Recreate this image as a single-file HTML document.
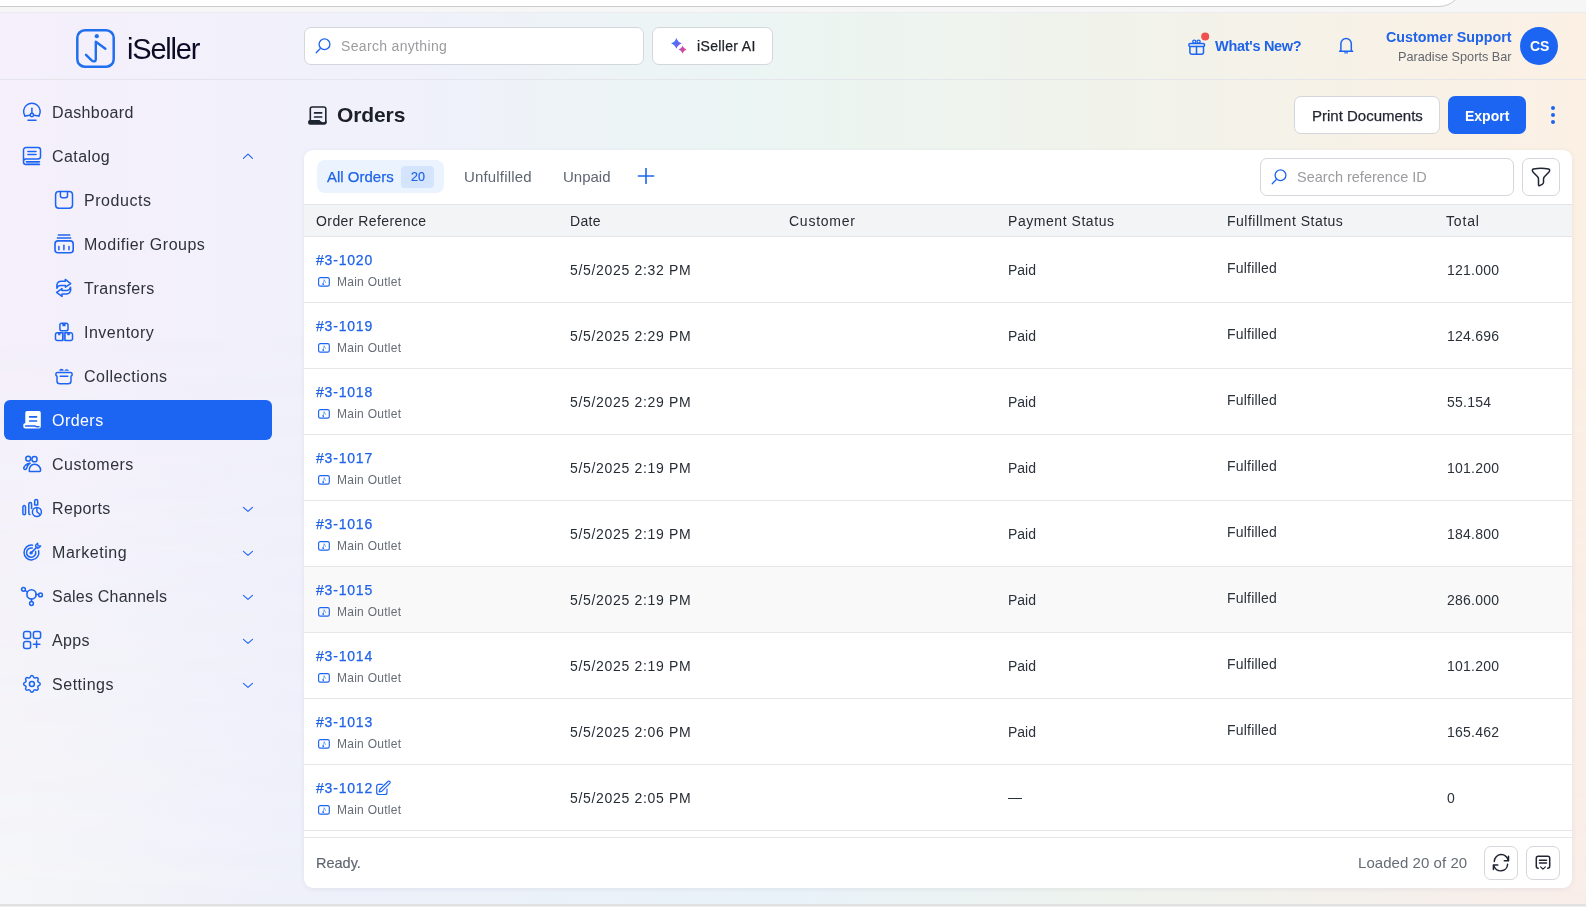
<!DOCTYPE html>
<html><head><meta charset="utf-8"><title>Orders - iSeller</title>
<style>
*{box-sizing:border-box;margin:0;padding:0}
html,body{width:1586px;height:907px;overflow:hidden}
body{font-family:"Liberation Sans",sans-serif;position:relative;background:#f0f1fa}
#bg1{position:absolute;left:0;top:0;width:1586px;height:907px;background:linear-gradient(90deg,#f5f0fb 0%,#f0f1fb 25%,#ebf5f3 47%,#f1f3eb 70%,#fcf0e4 100%)}
#bg2{position:absolute;left:0;top:0;width:1586px;height:907px;background:linear-gradient(90deg,#f5f6f8 0%,#eef0fa 19%,#e8f2f8 50%,#eef3ee 70%,#f9ede9 100%);-webkit-mask-image:linear-gradient(180deg,rgba(0,0,0,0) 0%,rgba(0,0,0,0) 35%,rgba(0,0,0,1) 100%);mask-image:linear-gradient(180deg,rgba(0,0,0,0) 0%,rgba(0,0,0,0) 35%,rgba(0,0,0,1) 100%)}
.abs{position:absolute}
.t{white-space:nowrap;will-change:transform}
.box{background:#fff;border:1px solid #d3d6db}
.card{background:#fff;border-radius:9px;box-shadow:0 1px 5px rgba(70,80,110,0.09)}
</style></head><body>

<div id="bg1"></div><div id="bg2"></div>
<div class="abs" style="left:0;top:0;width:1586px;height:13px;background:#f6f6f6;border-bottom:1px solid #ececf0"></div>
<div class="abs" style="left:-30px;top:-20px;width:1493px;height:26.6px;background:#fff;border:1.6px solid #cbcbcb;border-radius:0 0 24px 0"></div>
<div class="abs" style="left:0;top:79px;width:1586px;height:1px;background:#e3e5ea"></div>
<div class="abs" style="left:0;top:904px;width:1586px;height:3px;background:#f0f0f0;border-top:2px solid #e0e0e0"></div>

<svg class="abs" style="left:18px;top:98px" width="30" height="30" viewBox="0 0 30 30"><path d="M6.9 18 A8.3 8.3 0 1 1 20.9 18" fill="none" stroke="#1c64f2" stroke-width="1.5" stroke-linecap="round" stroke-linejoin="round"/><path d="M6.9 18 L12 17.2" fill="none" stroke="#1c64f2" stroke-width="1.5" stroke-linecap="round" stroke-linejoin="round"/><path d="M15.8 17.2 L20.9 18" fill="none" stroke="#1c64f2" stroke-width="1.5" stroke-linecap="round" stroke-linejoin="round"/><path d="M13.9 10.3 V15.3" fill="none" stroke="#1c64f2" stroke-width="1.5" stroke-linecap="round" stroke-linejoin="round"/><circle cx="13.9" cy="17" r="1.7" fill="none" stroke="#1c64f2" stroke-width="1.5"/><path d="M10 22.3 H18" fill="none" stroke="#1c64f2" stroke-width="1.5" stroke-linecap="round" stroke-linejoin="round"/></svg>
<div class="abs t " style="left:52px;top:105px;font-size:16px;line-height:16px;color:#2e323a;font-weight:400;letter-spacing:0.38px;">Dashboard</div>
<svg class="abs" style="left:18px;top:142px" width="30" height="30" viewBox="0 0 30 30"><path d="M5.5 20 V8 A2.5 2.5 0 0 1 8 5.5 H20 A2.5 2.5 0 0 1 22.5 8 V14.4 A2.5 2.5 0 0 1 20 16.9 H8 A2.5 2.5 0 0 0 5.5 19.4 V20 A2.5 2.5 0 0 0 8 22.5 H21.5" fill="none" stroke="#1c64f2" stroke-width="1.5" stroke-linecap="round" stroke-linejoin="round"/><path d="M8.3 19.7 H21.5" fill="none" stroke="#1c64f2" stroke-width="1.5" stroke-linecap="round" stroke-linejoin="round"/><path d="M8.3 19.7 H21.5 V22.5 H8.3Z" fill="rgba(28,100,242,0.45)"/><path d="M9.9 9.6 H18" fill="none" stroke="#1c64f2" stroke-width="1.5" stroke-linecap="round" stroke-linejoin="round"/><path d="M9.9 12.6 H18" fill="none" stroke="#1c64f2" stroke-width="1.5" stroke-linecap="round" stroke-linejoin="round"/></svg>
<div class="abs t " style="left:52px;top:149px;font-size:16px;line-height:16px;color:#2e323a;font-weight:400;letter-spacing:0.42px;">Catalog</div>
<svg class="abs" style="left:232px;top:142px" width="30" height="30" viewBox="0 0 30 30"><path d="M11.4 16.4 L16 12.2 L20.5 16.4" fill="none" stroke="#1c64f2" stroke-width="1.1" stroke-linecap="round" stroke-linejoin="round"/></svg>
<svg class="abs" style="left:50px;top:186px" width="30" height="30" viewBox="0 0 30 30"><path d="M8.8 5.5 H19.3 A3.2 3.2 0 0 1 22.5 8.7 V19 A3.2 3.2 0 0 1 19.3 22.2 H8.8 A3.2 3.2 0 0 1 5.6 19 V8.7 A3.2 3.2 0 0 1 8.8 5.5Z" fill="none" stroke="#1c64f2" stroke-width="1.5" stroke-linecap="round" stroke-linejoin="round"/><path d="M10.4 5.5 V9.8 A1.9 1.9 0 0 0 12.3 11.7 H15.6 A1.9 1.9 0 0 0 17.5 9.8 V5.5" fill="none" stroke="#1c64f2" stroke-width="1.5" stroke-linecap="round" stroke-linejoin="round"/></svg>
<div class="abs t " style="left:84px;top:193px;font-size:16px;line-height:16px;color:#2e323a;font-weight:400;letter-spacing:0.55px;">Products</div>
<svg class="abs" style="left:50px;top:230px" width="30" height="30" viewBox="0 0 30 30"><path d="M8.3 5 H19.8" fill="none" stroke="#1c64f2" stroke-width="1.5" stroke-linecap="round" stroke-linejoin="round"/><path d="M7.4 8.1 H20.7" fill="none" stroke="#1c64f2" stroke-width="1.5" stroke-linecap="round" stroke-linejoin="round"/><path d="M8 10.9 H20.2 A3 3 0 0 1 23.2 13.9 V19.8 A3 3 0 0 1 20.2 22.8 H8 A3 3 0 0 1 5 19.8 V13.9 A3 3 0 0 1 8 10.9Z" fill="none" stroke="#1c64f2" stroke-width="1.6" stroke-linecap="round" stroke-linejoin="round"/><path d="M8.9 16.5 V19.8" fill="none" stroke="#1c64f2" stroke-width="1.5" stroke-linecap="round" stroke-linejoin="round"/><path d="M13.9 15.2 V19.8" fill="none" stroke="#1c64f2" stroke-width="1.5" stroke-linecap="round" stroke-linejoin="round"/><path d="M19 16.5 V19.8" fill="none" stroke="#1c64f2" stroke-width="1.5" stroke-linecap="round" stroke-linejoin="round"/></svg>
<div class="abs t " style="left:84px;top:237px;font-size:16px;line-height:16px;color:#2e323a;font-weight:400;letter-spacing:0.5px;">Modifier Groups</div>
<svg class="abs" style="left:50px;top:274px" width="30" height="30" viewBox="0 0 30 30"><path d="M6.9 14.2 C6.2 10 7.8 7.3 10.8 7.3 H15.3 V5.4 L20.7 9.6 L15.4 13.2 V11.4 H10.8 C8.8 11.4 7.4 12.4 6.9 14.2Z" fill="none" stroke="#1c64f2" stroke-width="1.5" stroke-linecap="round" stroke-linejoin="round"/><path d="M20.5 13.2 C21.4 17 19.8 19.9 16.8 19.9 H12 V22.4 L6.6 18.3 L12 14.6 V16.4 H17 C19 16.4 20.1 15.2 20.5 13.2Z" fill="none" stroke="#1c64f2" stroke-width="1.5" stroke-linecap="round" stroke-linejoin="round"/></svg>
<div class="abs t " style="left:84px;top:281px;font-size:16px;line-height:16px;color:#2e323a;font-weight:400;letter-spacing:0.42px;">Transfers</div>
<svg class="abs" style="left:50px;top:318px" width="30" height="30" viewBox="0 0 30 30"><path d="M11.7 5.3 H16.2 A1.8 1.8 0 0 1 18 7.1 V10.9 A1.8 1.8 0 0 1 16.2 12.7 H11.7 A1.8 1.8 0 0 1 9.9 10.9 V7.1 A1.8 1.8 0 0 1 11.7 5.3Z" fill="none" stroke="#1c64f2" stroke-width="1.5" stroke-linecap="round" stroke-linejoin="round"/><path d="M12 5.3 H15.9 L15.4 8.2 H12.5Z" fill="#1c64f2"/><path d="M7.3 14.7 H12.7 V22.5 H7.3 A1.8 1.8 0 0 1 5.5 20.7 V16.5 A1.8 1.8 0 0 1 7.3 14.7Z" fill="none" stroke="#1c64f2" stroke-width="1.5" stroke-linecap="round" stroke-linejoin="round"/><path d="M7.9 14.7 H10.6 L10.3 17.3 H8.3Z" fill="#1c64f2"/><path d="M15 14.7 H20.7 A1.8 1.8 0 0 1 22.5 16.5 V20.7 A1.8 1.8 0 0 1 20.7 22.5 H15 Z" fill="none" stroke="#1c64f2" stroke-width="1.5" stroke-linecap="round" stroke-linejoin="round"/><path d="M17 14.7 H20 L19.7 17.3 H17.4Z" fill="#1c64f2"/><path d="M12.7 14.2 H15 V22.5 H12.7Z" fill="rgba(28,100,242,0.55)"/></svg>
<div class="abs t " style="left:84px;top:325px;font-size:16px;line-height:16px;color:#2e323a;font-weight:400;letter-spacing:0.5px;">Inventory</div>
<svg class="abs" style="left:50px;top:362px" width="30" height="30" viewBox="0 0 30 30"><path d="M7 14.3 C5.4 13.6 5.2 10.6 7.6 10.6 H20.4 C22.8 10.6 22.6 13.6 21 14.3 V19 A2.8 2.8 0 0 1 18.2 21.8 H9.8 A2.8 2.8 0 0 1 7 19 Z" fill="none" stroke="#1c64f2" stroke-width="1.5" stroke-linecap="round" stroke-linejoin="round"/><path d="M10.2 14.3 H17.8" fill="none" stroke="#1c64f2" stroke-width="1.5" stroke-linecap="round" stroke-linejoin="round"/><path d="M9 8.7 Q10.6 5 13.8 7.9 L13.4 8.7Z" fill="#1c64f2"/><path d="M14.2 8.7 Q16.8 6 19.1 8.7Z" fill="#1c64f2"/></svg>
<div class="abs t " style="left:84px;top:369px;font-size:16px;line-height:16px;color:#2e323a;font-weight:400;letter-spacing:0.48px;">Collections</div>
<div class="abs" style="left:4px;top:400px;width:268px;height:39.5px;background:#1c64f2;border-radius:6px"></div>
<svg class="abs" style="left:18px;top:406px" width="30" height="30" viewBox="0 0 30 30"><path d="M9.1 5 H21 A1.8 1.8 0 0 1 22.8 6.8 V20.5 A2 2 0 0 1 20.8 22.5 H7.3 A2 2 0 0 1 5.3 20.5 V18.8 A1.6 1.6 0 0 1 6.9 17.2 H7.3 V6.8 A1.8 1.8 0 0 1 9.1 5Z" fill="#fff"/><path d="M11.6 10.9 H18.6" fill="none" stroke="#1c64f2" stroke-width="1.6" stroke-linecap="round" stroke-linejoin="round"/><path d="M11.6 15 H18.6" fill="none" stroke="#1c64f2" stroke-width="1.6" stroke-linecap="round" stroke-linejoin="round"/><path d="M7.5 20 H17 C17.8 20 18 20.8 19 20.8 H21" fill="none" stroke="#1c64f2" stroke-width="1.4" stroke-linecap="round" stroke-linejoin="round"/></svg>
<div class="abs t " style="left:52px;top:413px;font-size:16px;line-height:16px;color:#ffffff;font-weight:400;letter-spacing:0.45px;">Orders</div>
<svg class="abs" style="left:18px;top:450px" width="30" height="30" viewBox="0 0 30 30"><circle cx="10.2" cy="8.7" r="2.4" fill="none" stroke="#1c64f2" stroke-width="1.5"/><circle cx="16.5" cy="9.2" r="2.6" fill="none" stroke="#1c64f2" stroke-width="1.5"/><path d="M12.2 13.2 C8.8 13 5.6 16.3 5.8 18.5 C6 19.8 7.8 19.9 8.4 18.6 C9 16.2 10.4 14.2 12.2 13.2Z" fill="none" stroke="#1c64f2" stroke-width="1.5" stroke-linecap="round" stroke-linejoin="round"/><path d="M11.3 21.5 C10.8 17.2 13.2 14.3 16.6 14.3 C20.2 14.3 22.6 17.2 22.6 20.2 C22.6 21.1 22.1 21.5 21.3 21.5Z" fill="none" stroke="#1c64f2" stroke-width="1.5" stroke-linecap="round" stroke-linejoin="round"/></svg>
<div class="abs t " style="left:52px;top:457px;font-size:16px;line-height:16px;color:#2e323a;font-weight:400;letter-spacing:0.5px;">Customers</div>
<svg class="abs" style="left:18px;top:494px" width="30" height="30" viewBox="0 0 30 30"><path d="M6.2 11.6 A1.3 1.3 0 0 1 7.5 12.9 V19.4 A1.3 1.3 0 0 1 6.2 20.7 A1.3 1.3 0 0 1 4.9 19.4 V12.9 A1.3 1.3 0 0 1 6.2 11.6Z" fill="none" stroke="#1c64f2" stroke-width="1.5" stroke-linecap="round" stroke-linejoin="round"/><path d="M12.2 8.6 A1.4 1.4 0 0 1 13.6 10 V14.5 M12 20.5 A1.4 1.4 0 0 1 10.8 19.2 V10 A1.4 1.4 0 0 1 12.2 8.6" fill="none" stroke="#1c64f2" stroke-width="1.5" stroke-linecap="round" stroke-linejoin="round"/><path d="M18.3 5.5 A1.4 1.4 0 0 1 19.7 6.9 V11 H16.7 V6.9 A1.4 1.4 0 0 1 18.3 5.5Z" fill="none" stroke="#1c64f2" stroke-width="1.5" stroke-linecap="round" stroke-linejoin="round"/><circle cx="18.9" cy="18" r="4.5" fill="none" stroke="#1c64f2" stroke-width="1.5"/><path d="M18.9 14.6 V17.8 L21.6 20.2" fill="none" stroke="#1c64f2" stroke-width="1.5" stroke-linecap="round" stroke-linejoin="round"/></svg>
<div class="abs t " style="left:52px;top:501px;font-size:16px;line-height:16px;color:#2e323a;font-weight:400;letter-spacing:0.37px;">Reports</div>
<svg class="abs" style="left:232px;top:494px" width="30" height="30" viewBox="0 0 30 30"><path d="M11.4 13.4 L16 17.4 L20.5 13.4" fill="none" stroke="#1c64f2" stroke-width="1.1" stroke-linecap="round" stroke-linejoin="round"/></svg>
<svg class="abs" style="left:18px;top:538px" width="30" height="30" viewBox="0 0 30 30"><path d="M14.5 7.2 A7.4 7.4 0 1 0 20.6 12.6" fill="none" stroke="#1c64f2" stroke-width="1.5" stroke-linecap="round" stroke-linejoin="round"/><path d="M14.2 10.1 A4.6 4.6 0 1 0 17.6 13.4" fill="none" stroke="#1c64f2" stroke-width="1.5" stroke-linecap="round" stroke-linejoin="round"/><circle cx="13.1" cy="14.9" r="1.7" fill="#1c64f2"/><path d="M13.1 14.9 L19 9" fill="none" stroke="#1c64f2" stroke-width="1.5" stroke-linecap="round" stroke-linejoin="round"/><path d="M17.5 8.2 L17.9 6.8 L19.7 5.2 L20 7.8 L22.7 8 L21 9.7 L19.6 10.3 Z" fill="none" stroke="#1c64f2" stroke-width="1.3" stroke-linecap="round" stroke-linejoin="round"/></svg>
<div class="abs t " style="left:52px;top:545px;font-size:16px;line-height:16px;color:#2e323a;font-weight:400;letter-spacing:0.55px;">Marketing</div>
<svg class="abs" style="left:232px;top:538px" width="30" height="30" viewBox="0 0 30 30"><path d="M11.4 13.4 L16 17.4 L20.5 13.4" fill="none" stroke="#1c64f2" stroke-width="1.1" stroke-linecap="round" stroke-linejoin="round"/></svg>
<svg class="abs" style="left:18px;top:582px" width="30" height="30" viewBox="0 0 30 30"><circle cx="13.5" cy="12.4" r="4.6" fill="none" stroke="#1c64f2" stroke-width="1.6"/><circle cx="5.5" cy="7.3" r="1.9" fill="none" stroke="#1c64f2" stroke-width="1.5"/><circle cx="22.5" cy="12.9" r="1.9" fill="none" stroke="#1c64f2" stroke-width="1.5"/><circle cx="13.5" cy="21.5" r="1.9" fill="none" stroke="#1c64f2" stroke-width="1.5"/><path d="M7.1 8.5 L9.3 10" fill="none" stroke="#1c64f2" stroke-width="1.5" stroke-linecap="round" stroke-linejoin="round"/><path d="M18.1 12.6 H20.6" fill="none" stroke="#1c64f2" stroke-width="1.5" stroke-linecap="round" stroke-linejoin="round"/><path d="M13.5 17 V19.6" fill="none" stroke="#1c64f2" stroke-width="1.5" stroke-linecap="round" stroke-linejoin="round"/></svg>
<div class="abs t " style="left:52px;top:589px;font-size:16px;line-height:16px;color:#2e323a;font-weight:400;letter-spacing:0.22px;">Sales Channels</div>
<svg class="abs" style="left:232px;top:582px" width="30" height="30" viewBox="0 0 30 30"><path d="M11.4 13.4 L16 17.4 L20.5 13.4" fill="none" stroke="#1c64f2" stroke-width="1.1" stroke-linecap="round" stroke-linejoin="round"/></svg>
<svg class="abs" style="left:18px;top:626px" width="30" height="30" viewBox="0 0 30 30"><path d="M7.6 5.5 H10.6 A2 2 0 0 1 12.6 7.5 V10.5 A2 2 0 0 1 10.6 12.5 H7.6 A2 2 0 0 1 5.6 10.5 V7.5 A2 2 0 0 1 7.6 5.5Z" fill="none" stroke="#1c64f2" stroke-width="1.5" stroke-linecap="round" stroke-linejoin="round"/><path d="M17.4 5.5 H20.6 A2 2 0 0 1 22.6 7.5 V10.5 A2 2 0 0 1 20.6 12.5 H17.4 A2 2 0 0 1 15.4 10.5 V7.5 A2 2 0 0 1 17.4 5.5Z" fill="none" stroke="#1c64f2" stroke-width="1.5" stroke-linecap="round" stroke-linejoin="round"/><path d="M7.6 15.4 H10.6 A2 2 0 0 1 12.6 17.4 V20.6 A2 2 0 0 1 10.6 22.6 H7.6 A2 2 0 0 1 5.6 20.6 V17.4 A2 2 0 0 1 7.6 15.4Z" fill="none" stroke="#1c64f2" stroke-width="1.5" stroke-linecap="round" stroke-linejoin="round"/><path d="M15.4 18.3 H21.9" fill="none" stroke="#1c64f2" stroke-width="1.5" stroke-linecap="round" stroke-linejoin="round"/><path d="M18.6 15 V21.6" fill="none" stroke="#1c64f2" stroke-width="1.5" stroke-linecap="round" stroke-linejoin="round"/></svg>
<div class="abs t " style="left:52px;top:633px;font-size:16px;line-height:16px;color:#2e323a;font-weight:400;letter-spacing:0.33px;">Apps</div>
<svg class="abs" style="left:232px;top:626px" width="30" height="30" viewBox="0 0 30 30"><path d="M11.4 13.4 L16 17.4 L20.5 13.4" fill="none" stroke="#1c64f2" stroke-width="1.1" stroke-linecap="round" stroke-linejoin="round"/></svg>
<svg class="abs" style="left:18px;top:670px" width="30" height="30" viewBox="0 0 30 30"><g transform="translate(13.9 13.9) scale(0.92) translate(-12 -12)"><path d="M10.325 4.317c.426 -1.756 2.924 -1.756 3.35 0a1.724 1.724 0 0 0 2.573 1.066c1.543 -.94 3.31 .826 2.37 2.37a1.724 1.724 0 0 0 1.065 2.572c1.756 .426 1.756 2.924 0 3.35a1.724 1.724 0 0 0 -1.066 2.573c.94 1.543 -.826 3.31 -2.37 2.37a1.724 1.724 0 0 0 -2.572 1.065c-.426 1.756 -2.924 1.756 -3.35 0a1.724 1.724 0 0 0 -2.573 -1.066c-1.543 .94 -3.31 -.826 -2.37 -2.37a1.724 1.724 0 0 0 -1.065 -2.572c-1.756 -.426 -1.756 -2.924 0 -3.35a1.724 1.724 0 0 0 1.066 -2.573c-.94 -1.543 .826 -3.31 2.37 -2.37c1 .608 2.296 .07 2.572 -1.065z" fill="none" stroke="#1c64f2" stroke-width="1.62" stroke-linecap="round" stroke-linejoin="round"/><circle cx="12" cy="12" r="2.7" fill="none" stroke="#1c64f2" stroke-width="1.62"/></g></svg>
<div class="abs t " style="left:52px;top:677px;font-size:16px;line-height:16px;color:#2e323a;font-weight:400;letter-spacing:0.53px;">Settings</div>
<svg class="abs" style="left:232px;top:670px" width="30" height="30" viewBox="0 0 30 30"><path d="M11.4 13.4 L16 17.4 L20.5 13.4" fill="none" stroke="#1c64f2" stroke-width="1.1" stroke-linecap="round" stroke-linejoin="round"/></svg>
<svg class="abs" style="left:76px;top:29px" width="39" height="39" viewBox="0 0 39 39"><rect x="1.3" y="1.3" width="36.4" height="36.4" rx="7.5" fill="none" stroke="#1f6fef" stroke-width="2.5"/><circle cx="20.8" cy="7.2" r="2.1" fill="#1f6fef"/><path d="M10 25.8 L15.9 31.7 C16.9 32.7 19.8 32.8 19.8 30.4 V12.7 L29.4 19.8" fill="none" stroke="#1f6fef" stroke-width="2.4" stroke-linecap="round" stroke-linejoin="round"/></svg>
<div class="abs t " style="left:127px;top:35px;font-size:29px;line-height:29px;color:#0b0b26;font-weight:400;letter-spacing:-1.2px;">iSeller</div>
<div class="abs box" style="left:304px;top:27px;width:340px;height:38px;border-radius:7px"></div>
<svg class="abs" style="left:304px;top:27px" width="40" height="38" viewBox="0 0 40 38"><path d="M12.2 25.7 L16.1 21.8" fill="none" stroke="#1c64f2" stroke-width="1.3" stroke-linecap="round" stroke-linejoin="round"/><circle cx="20.5" cy="17.25" r="5.4" fill="none" stroke="#1c64f2" stroke-width="1.3"/></svg>
<div class="abs t " style="left:341px;top:39px;font-size:14px;line-height:14px;color:#9c9ca0;font-weight:400;letter-spacing:0.33px;">Search anything</div>
<div class="abs box" style="left:652px;top:27px;width:121px;height:38px;border-radius:7px"></div>
<svg class="abs" style="left:664px;top:31px" width="30" height="30" viewBox="0 0 30 30"><defs><linearGradient id="g1" x1="0" y1="0.3" x2="1" y2="0.7"><stop offset="0" stop-color="#2a86f7"/><stop offset="1" stop-color="#8f4cf6"/></linearGradient><linearGradient id="g2" x1="0" y1="0.3" x2="1" y2="0.7"><stop offset="0" stop-color="#a347e6"/><stop offset="1" stop-color="#f7475c"/></linearGradient></defs><path d="M12.4 7 Q13.7 11.1 17.8 12.4 Q13.7 13.7 12.4 17.8 Q11.1 13.7 7 12.4 Q11.1 11.1 12.4 7Z" fill="url(#g1)"/><path d="M18.6 14.7 Q19.6 17.6 22.5 18.6 Q19.6 19.6 18.6 22.5 Q17.6 19.6 14.7 18.6 Q17.6 17.6 18.6 14.7Z" fill="url(#g2)"/></svg>
<div class="abs t " style="left:697px;top:39px;font-size:14px;line-height:14px;color:#1d2127;font-weight:400;letter-spacing:0.34px;-webkit-text-stroke:0.25px currentColor">iSeller AI</div>
<svg class="abs" style="left:1182px;top:28px" width="30" height="30" viewBox="0 0 30 30"><path d="M8.4 15.4 H21 A1.6 1.6 0 0 1 22.6 17 A1.6 1.6 0 0 1 21 18.6 H8.4 A1.6 1.6 0 0 1 6.8 17 A1.6 1.6 0 0 1 8.4 15.4Z" fill="none" stroke="#1c64f2" stroke-width="1.5" stroke-linecap="round" stroke-linejoin="round"/><path d="M7.9 18.6 V24.2 A2 2 0 0 0 9.9 26.2 H19.5 A2 2 0 0 0 21.5 24.2 V18.6" fill="none" stroke="#1c64f2" stroke-width="1.5" stroke-linecap="round" stroke-linejoin="round"/><path d="M14.5 18.6 V26.2" fill="none" stroke="#1c64f2" stroke-width="1.5" stroke-linecap="round" stroke-linejoin="round"/><circle cx="12.3" cy="13.6" r="1.55" fill="none" stroke="#1c64f2" stroke-width="1.3"/><circle cx="16.6" cy="13.6" r="1.55" fill="none" stroke="#1c64f2" stroke-width="1.3"/><circle cx="23.2" cy="8.6" r="4" fill="#ef4f4f"/></svg>
<div class="abs t " style="left:1215px;top:39px;font-size:14.5px;line-height:14.5px;color:#1f63e8;font-weight:700;letter-spacing:-0.3px;">What's New?</div>
<svg class="abs" style="left:1331px;top:31px" width="30" height="30" viewBox="0 0 30 30"><path d="M9.9 19.4 V12.6 A5.2 5.2 0 0 1 20.3 12.6 V19.4 L21.6 20.3 H8.6 Z" fill="none" stroke="#1c64f2" stroke-width="1.5" stroke-linecap="round" stroke-linejoin="round"/><path d="M13.2 21 H17 V22.6 H13.2Z" fill="rgba(28,100,242,0.7)"/></svg>
<div class="abs t " style="left:1386px;top:30px;font-size:14.3px;line-height:14.3px;color:#1f63e8;font-weight:700;letter-spacing:0px;">Customer Support</div>
<div class="abs t " style="left:1397.6px;top:51px;font-size:12.7px;line-height:12.7px;color:#62666d;font-weight:400;letter-spacing:0px;">Paradise Sports Bar</div>
<div class="abs" style="left:1520.3px;top:27px;width:38px;height:38px;border-radius:50%;background:#1c64f2"></div>
<div class="abs t " style="left:1529.8px;top:39px;font-size:14px;line-height:14px;color:#ffffff;font-weight:700;letter-spacing:0px;">CS</div>
<svg class="abs" style="left:302px;top:100px" width="30" height="30" viewBox="0 0 30 30"><path d="M23.8 23 V8.8 A1.8 1.8 0 0 0 22 7 H10.1 A1.8 1.8 0 0 0 8.3 8.8 V20.5" fill="none" stroke="#1c2431" stroke-width="1.6" stroke-linecap="round" stroke-linejoin="round"/><path d="M12.6 12.9 H19.6" fill="none" stroke="#1c2431" stroke-width="1.7" stroke-linecap="round" stroke-linejoin="round"/><path d="M12.6 17 H19.6" fill="none" stroke="#1c2431" stroke-width="1.7" stroke-linecap="round" stroke-linejoin="round"/><path d="M6.1 21.8 A1.8 1.8 0 0 1 7.9 20 H17.6 C18.6 21.4 19.6 22.2 21.2 22.2 C22.6 22.2 23.6 21.4 24.5 20.5 V22.5 A2.2 2.2 0 0 1 22.3 24.7 H8.1 A2 2 0 0 1 6.1 22.7Z" fill="#1c2431"/></svg>
<div class="abs t " style="left:337.3px;top:104px;font-size:21px;line-height:21px;color:#1a1f29;font-weight:700;letter-spacing:-0.1px;">Orders</div>
<div class="abs box" style="left:1294px;top:96px;width:146px;height:38px;border-radius:7px"></div>
<div class="abs t " style="left:1312px;top:108px;font-size:15px;line-height:15px;color:#1f2430;font-weight:400;letter-spacing:0px;-webkit-text-stroke:0.25px currentColor">Print Documents</div>
<div class="abs" style="left:1448px;top:96px;width:78px;height:38px;border-radius:7px;background:#1c64f2"></div>
<div class="abs t " style="left:1465px;top:109px;font-size:14px;line-height:14px;color:#ffffff;font-weight:700;letter-spacing:0px;">Export</div>
<div class="abs" style="left:1550.8px;top:105.9px;width:4.4px;height:4.4px;border-radius:50%;background:#1c64f2"></div>
<div class="abs" style="left:1550.8px;top:112.8px;width:4.4px;height:4.4px;border-radius:50%;background:#1c64f2"></div>
<div class="abs" style="left:1550.8px;top:119.5px;width:4.4px;height:4.4px;border-radius:50%;background:#1c64f2"></div>
<div class="abs card" style="left:304px;top:150px;width:1268px;height:738px;"></div>
<div class="abs" style="left:317px;top:160px;width:127px;height:33px;border-radius:8px;background:#ebf3fe"></div>
<div class="abs t " style="left:327px;top:169px;font-size:15px;line-height:15px;color:#1f63e8;font-weight:400;letter-spacing:0px;-webkit-text-stroke:0.25px currentColor">All Orders</div>
<div class="abs" style="left:401px;top:166px;width:33px;height:22px;border-radius:4px;background:#d4e4fc"></div>
<div class="abs t " style="left:410.8px;top:171px;font-size:12.5px;line-height:12.5px;color:#1f63e8;font-weight:400;letter-spacing:0px;-webkit-text-stroke:0.2px currentColor">20</div>
<div class="abs t " style="left:464.3px;top:169px;font-size:15px;line-height:15px;color:#5f6672;font-weight:400;letter-spacing:0.17px;">Unfulfilled</div>
<div class="abs t " style="left:562.7px;top:169px;font-size:15px;line-height:15px;color:#5f6672;font-weight:400;letter-spacing:0px;">Unpaid</div>
<svg class="abs" style="left:630px;top:168px" width="30" height="16" viewBox="0 0 30 16"><path d="M8.4 8 H23.6" fill="none" stroke="#1c64f2" stroke-width="1.6" stroke-linecap="round" stroke-linejoin="round"/><path d="M16 0.6 V15.4" fill="none" stroke="#1c64f2" stroke-width="1.6" stroke-linecap="round" stroke-linejoin="round"/></svg>
<div class="abs box" style="left:1260px;top:158px;width:254px;height:38px;border-radius:7px"></div>
<svg class="abs" style="left:1260px;top:158px" width="40" height="38" viewBox="0 0 40 38"><path d="M12.2 25.7 L16.1 21.8" fill="none" stroke="#1c64f2" stroke-width="1.3" stroke-linecap="round" stroke-linejoin="round"/><circle cx="20.5" cy="17.25" r="5.4" fill="none" stroke="#1c64f2" stroke-width="1.3"/></svg>
<div class="abs t " style="left:1297.3px;top:170px;font-size:14.5px;line-height:14.5px;color:#9c9ca0;font-weight:400;letter-spacing:0px;">Search reference ID</div>
<div class="abs box" style="left:1522px;top:158px;width:38px;height:38px;border-radius:7px"></div>
<svg class="abs" style="left:1526px;top:162px" width="30" height="30" viewBox="0 0 30 30"><path d="M7.5 7 C11 6.4 19 6.4 22.5 7 C23.9 7.3 24 8.7 23 9.9 L18.4 14.8 C17.7 15.6 17.5 16.2 17.5 17.2 V20.4 C17.5 21.2 16.9 21.8 16.1 22.4 L13.6 23.6 C12.9 23.9 12.5 23.5 12.5 22.8 V17.2 C12.5 16.2 12.3 15.6 11.6 14.8 L7 9.9 C6 8.7 6.1 7.3 7.5 7Z" fill="none" stroke="#1f2532" stroke-width="1.5" stroke-linecap="round" stroke-linejoin="round"/></svg>
<div class="abs" style="left:304px;top:204px;width:1268px;height:33px;background:#f3f4f6;border-top:1px solid #e3e5e9;border-bottom:1px solid #e3e5e9"></div>
<div class="abs t " style="left:316px;top:214px;font-size:14px;line-height:14px;color:#262b33;font-weight:400;letter-spacing:0.42px;">Order Reference</div>
<div class="abs t " style="left:570px;top:214px;font-size:14px;line-height:14px;color:#262b33;font-weight:400;letter-spacing:0.3px;">Date</div>
<div class="abs t " style="left:789px;top:214px;font-size:14px;line-height:14px;color:#262b33;font-weight:400;letter-spacing:0.75px;">Customer</div>
<div class="abs t " style="left:1008px;top:214px;font-size:14px;line-height:14px;color:#262b33;font-weight:400;letter-spacing:0.55px;">Payment Status</div>
<div class="abs t " style="left:1227px;top:214px;font-size:14px;line-height:14px;color:#262b33;font-weight:400;letter-spacing:0.5px;">Fulfillment Status</div>
<div class="abs t " style="left:1446px;top:214px;font-size:14px;line-height:14px;color:#262b33;font-weight:400;letter-spacing:0.85px;">Total</div>
<div class="abs" style="left:304px;top:302px;width:1268px;height:1px;background:#e6e7eb"></div>
<div class="abs t " style="left:316px;top:253px;font-size:14px;line-height:14px;color:#1f63e8;font-weight:400;letter-spacing:0.8px;-webkit-text-stroke:0.25px currentColor">#3-1020</div>
<svg class="abs" style="left:310px;top:270px" width="30" height="20" viewBox="0 0 30 20"><path d="M10.3 7.6 H17.6 A1.7 1.7 0 0 1 19.3 9.3 V14.4 A1.7 1.7 0 0 1 17.6 16.1 H10.3 A1.7 1.7 0 0 1 8.6 14.4 V9.3 A1.7 1.7 0 0 1 10.3 7.6Z" fill="none" stroke="#1c64f2" stroke-width="1.15" stroke-linecap="round" stroke-linejoin="round"/><path d="M12.2 13.4 L13.3 14.3 L14.1 9.6 L15.6 12.5" fill="none" stroke="rgba(28,100,242,0.6)" stroke-width="0.9" stroke-linecap="round" stroke-linejoin="round"/><circle cx="13.3" cy="14.2" r="0.8" fill="#1c64f2"/></svg>
<div class="abs t " style="left:336.5px;top:276px;font-size:12px;line-height:12px;color:#666c76;font-weight:400;letter-spacing:0.26px;">Main Outlet</div>
<div class="abs t " style="left:570px;top:263px;font-size:14px;line-height:14px;color:#262c34;font-weight:400;letter-spacing:0.68px;">5/5/2025 2:32 PM</div>
<div class="abs t " style="left:1008px;top:263px;font-size:14px;line-height:14px;color:#2b313a;font-weight:400;letter-spacing:0px;">Paid</div>
<div class="abs t " style="left:1227.4px;top:261px;font-size:14px;line-height:14px;color:#2b313a;font-weight:400;letter-spacing:0.2px;">Fulfilled</div>
<div class="abs t " style="left:1446.5px;top:263px;font-size:14px;line-height:14px;color:#2b313a;font-weight:400;letter-spacing:0.25px;">121.000</div>
<div class="abs" style="left:304px;top:368px;width:1268px;height:1px;background:#e6e7eb"></div>
<div class="abs t " style="left:316px;top:319px;font-size:14px;line-height:14px;color:#1f63e8;font-weight:400;letter-spacing:0.8px;-webkit-text-stroke:0.25px currentColor">#3-1019</div>
<svg class="abs" style="left:310px;top:336px" width="30" height="20" viewBox="0 0 30 20"><path d="M10.3 7.6 H17.6 A1.7 1.7 0 0 1 19.3 9.3 V14.4 A1.7 1.7 0 0 1 17.6 16.1 H10.3 A1.7 1.7 0 0 1 8.6 14.4 V9.3 A1.7 1.7 0 0 1 10.3 7.6Z" fill="none" stroke="#1c64f2" stroke-width="1.15" stroke-linecap="round" stroke-linejoin="round"/><path d="M12.2 13.4 L13.3 14.3 L14.1 9.6 L15.6 12.5" fill="none" stroke="rgba(28,100,242,0.6)" stroke-width="0.9" stroke-linecap="round" stroke-linejoin="round"/><circle cx="13.3" cy="14.2" r="0.8" fill="#1c64f2"/></svg>
<div class="abs t " style="left:336.5px;top:342px;font-size:12px;line-height:12px;color:#666c76;font-weight:400;letter-spacing:0.26px;">Main Outlet</div>
<div class="abs t " style="left:570px;top:329px;font-size:14px;line-height:14px;color:#262c34;font-weight:400;letter-spacing:0.68px;">5/5/2025 2:29 PM</div>
<div class="abs t " style="left:1008px;top:329px;font-size:14px;line-height:14px;color:#2b313a;font-weight:400;letter-spacing:0px;">Paid</div>
<div class="abs t " style="left:1227.4px;top:327px;font-size:14px;line-height:14px;color:#2b313a;font-weight:400;letter-spacing:0.2px;">Fulfilled</div>
<div class="abs t " style="left:1446.5px;top:329px;font-size:14px;line-height:14px;color:#2b313a;font-weight:400;letter-spacing:0.25px;">124.696</div>
<div class="abs" style="left:304px;top:434px;width:1268px;height:1px;background:#e6e7eb"></div>
<div class="abs t " style="left:316px;top:385px;font-size:14px;line-height:14px;color:#1f63e8;font-weight:400;letter-spacing:0.8px;-webkit-text-stroke:0.25px currentColor">#3-1018</div>
<svg class="abs" style="left:310px;top:402px" width="30" height="20" viewBox="0 0 30 20"><path d="M10.3 7.6 H17.6 A1.7 1.7 0 0 1 19.3 9.3 V14.4 A1.7 1.7 0 0 1 17.6 16.1 H10.3 A1.7 1.7 0 0 1 8.6 14.4 V9.3 A1.7 1.7 0 0 1 10.3 7.6Z" fill="none" stroke="#1c64f2" stroke-width="1.15" stroke-linecap="round" stroke-linejoin="round"/><path d="M12.2 13.4 L13.3 14.3 L14.1 9.6 L15.6 12.5" fill="none" stroke="rgba(28,100,242,0.6)" stroke-width="0.9" stroke-linecap="round" stroke-linejoin="round"/><circle cx="13.3" cy="14.2" r="0.8" fill="#1c64f2"/></svg>
<div class="abs t " style="left:336.5px;top:408px;font-size:12px;line-height:12px;color:#666c76;font-weight:400;letter-spacing:0.26px;">Main Outlet</div>
<div class="abs t " style="left:570px;top:395px;font-size:14px;line-height:14px;color:#262c34;font-weight:400;letter-spacing:0.68px;">5/5/2025 2:29 PM</div>
<div class="abs t " style="left:1008px;top:395px;font-size:14px;line-height:14px;color:#2b313a;font-weight:400;letter-spacing:0px;">Paid</div>
<div class="abs t " style="left:1227.4px;top:393px;font-size:14px;line-height:14px;color:#2b313a;font-weight:400;letter-spacing:0.2px;">Fulfilled</div>
<div class="abs t " style="left:1446.5px;top:395px;font-size:14px;line-height:14px;color:#2b313a;font-weight:400;letter-spacing:0.25px;">55.154</div>
<div class="abs" style="left:304px;top:500px;width:1268px;height:1px;background:#e6e7eb"></div>
<div class="abs t " style="left:316px;top:451px;font-size:14px;line-height:14px;color:#1f63e8;font-weight:400;letter-spacing:0.8px;-webkit-text-stroke:0.25px currentColor">#3-1017</div>
<svg class="abs" style="left:310px;top:468px" width="30" height="20" viewBox="0 0 30 20"><path d="M10.3 7.6 H17.6 A1.7 1.7 0 0 1 19.3 9.3 V14.4 A1.7 1.7 0 0 1 17.6 16.1 H10.3 A1.7 1.7 0 0 1 8.6 14.4 V9.3 A1.7 1.7 0 0 1 10.3 7.6Z" fill="none" stroke="#1c64f2" stroke-width="1.15" stroke-linecap="round" stroke-linejoin="round"/><path d="M12.2 13.4 L13.3 14.3 L14.1 9.6 L15.6 12.5" fill="none" stroke="rgba(28,100,242,0.6)" stroke-width="0.9" stroke-linecap="round" stroke-linejoin="round"/><circle cx="13.3" cy="14.2" r="0.8" fill="#1c64f2"/></svg>
<div class="abs t " style="left:336.5px;top:474px;font-size:12px;line-height:12px;color:#666c76;font-weight:400;letter-spacing:0.26px;">Main Outlet</div>
<div class="abs t " style="left:570px;top:461px;font-size:14px;line-height:14px;color:#262c34;font-weight:400;letter-spacing:0.68px;">5/5/2025 2:19 PM</div>
<div class="abs t " style="left:1008px;top:461px;font-size:14px;line-height:14px;color:#2b313a;font-weight:400;letter-spacing:0px;">Paid</div>
<div class="abs t " style="left:1227.4px;top:459px;font-size:14px;line-height:14px;color:#2b313a;font-weight:400;letter-spacing:0.2px;">Fulfilled</div>
<div class="abs t " style="left:1446.5px;top:461px;font-size:14px;line-height:14px;color:#2b313a;font-weight:400;letter-spacing:0.25px;">101.200</div>
<div class="abs" style="left:304px;top:566px;width:1268px;height:1px;background:#e6e7eb"></div>
<div class="abs t " style="left:316px;top:517px;font-size:14px;line-height:14px;color:#1f63e8;font-weight:400;letter-spacing:0.8px;-webkit-text-stroke:0.25px currentColor">#3-1016</div>
<svg class="abs" style="left:310px;top:534px" width="30" height="20" viewBox="0 0 30 20"><path d="M10.3 7.6 H17.6 A1.7 1.7 0 0 1 19.3 9.3 V14.4 A1.7 1.7 0 0 1 17.6 16.1 H10.3 A1.7 1.7 0 0 1 8.6 14.4 V9.3 A1.7 1.7 0 0 1 10.3 7.6Z" fill="none" stroke="#1c64f2" stroke-width="1.15" stroke-linecap="round" stroke-linejoin="round"/><path d="M12.2 13.4 L13.3 14.3 L14.1 9.6 L15.6 12.5" fill="none" stroke="rgba(28,100,242,0.6)" stroke-width="0.9" stroke-linecap="round" stroke-linejoin="round"/><circle cx="13.3" cy="14.2" r="0.8" fill="#1c64f2"/></svg>
<div class="abs t " style="left:336.5px;top:540px;font-size:12px;line-height:12px;color:#666c76;font-weight:400;letter-spacing:0.26px;">Main Outlet</div>
<div class="abs t " style="left:570px;top:527px;font-size:14px;line-height:14px;color:#262c34;font-weight:400;letter-spacing:0.68px;">5/5/2025 2:19 PM</div>
<div class="abs t " style="left:1008px;top:527px;font-size:14px;line-height:14px;color:#2b313a;font-weight:400;letter-spacing:0px;">Paid</div>
<div class="abs t " style="left:1227.4px;top:525px;font-size:14px;line-height:14px;color:#2b313a;font-weight:400;letter-spacing:0.2px;">Fulfilled</div>
<div class="abs t " style="left:1446.5px;top:527px;font-size:14px;line-height:14px;color:#2b313a;font-weight:400;letter-spacing:0.25px;">184.800</div>
<div class="abs" style="left:304px;top:567px;width:1268px;height:66px;background:#f9f9fa"></div>
<div class="abs" style="left:304px;top:632px;width:1268px;height:1px;background:#e6e7eb"></div>
<div class="abs t " style="left:316px;top:583px;font-size:14px;line-height:14px;color:#1f63e8;font-weight:400;letter-spacing:0.8px;-webkit-text-stroke:0.25px currentColor">#3-1015</div>
<svg class="abs" style="left:310px;top:600px" width="30" height="20" viewBox="0 0 30 20"><path d="M10.3 7.6 H17.6 A1.7 1.7 0 0 1 19.3 9.3 V14.4 A1.7 1.7 0 0 1 17.6 16.1 H10.3 A1.7 1.7 0 0 1 8.6 14.4 V9.3 A1.7 1.7 0 0 1 10.3 7.6Z" fill="none" stroke="#1c64f2" stroke-width="1.15" stroke-linecap="round" stroke-linejoin="round"/><path d="M12.2 13.4 L13.3 14.3 L14.1 9.6 L15.6 12.5" fill="none" stroke="rgba(28,100,242,0.6)" stroke-width="0.9" stroke-linecap="round" stroke-linejoin="round"/><circle cx="13.3" cy="14.2" r="0.8" fill="#1c64f2"/></svg>
<div class="abs t " style="left:336.5px;top:606px;font-size:12px;line-height:12px;color:#666c76;font-weight:400;letter-spacing:0.26px;">Main Outlet</div>
<div class="abs t " style="left:570px;top:593px;font-size:14px;line-height:14px;color:#262c34;font-weight:400;letter-spacing:0.68px;">5/5/2025 2:19 PM</div>
<div class="abs t " style="left:1008px;top:593px;font-size:14px;line-height:14px;color:#2b313a;font-weight:400;letter-spacing:0px;">Paid</div>
<div class="abs t " style="left:1227.4px;top:591px;font-size:14px;line-height:14px;color:#2b313a;font-weight:400;letter-spacing:0.2px;">Fulfilled</div>
<div class="abs t " style="left:1446.5px;top:593px;font-size:14px;line-height:14px;color:#2b313a;font-weight:400;letter-spacing:0.25px;">286.000</div>
<div class="abs" style="left:304px;top:698px;width:1268px;height:1px;background:#e6e7eb"></div>
<div class="abs t " style="left:316px;top:649px;font-size:14px;line-height:14px;color:#1f63e8;font-weight:400;letter-spacing:0.8px;-webkit-text-stroke:0.25px currentColor">#3-1014</div>
<svg class="abs" style="left:310px;top:666px" width="30" height="20" viewBox="0 0 30 20"><path d="M10.3 7.6 H17.6 A1.7 1.7 0 0 1 19.3 9.3 V14.4 A1.7 1.7 0 0 1 17.6 16.1 H10.3 A1.7 1.7 0 0 1 8.6 14.4 V9.3 A1.7 1.7 0 0 1 10.3 7.6Z" fill="none" stroke="#1c64f2" stroke-width="1.15" stroke-linecap="round" stroke-linejoin="round"/><path d="M12.2 13.4 L13.3 14.3 L14.1 9.6 L15.6 12.5" fill="none" stroke="rgba(28,100,242,0.6)" stroke-width="0.9" stroke-linecap="round" stroke-linejoin="round"/><circle cx="13.3" cy="14.2" r="0.8" fill="#1c64f2"/></svg>
<div class="abs t " style="left:336.5px;top:672px;font-size:12px;line-height:12px;color:#666c76;font-weight:400;letter-spacing:0.26px;">Main Outlet</div>
<div class="abs t " style="left:570px;top:659px;font-size:14px;line-height:14px;color:#262c34;font-weight:400;letter-spacing:0.68px;">5/5/2025 2:19 PM</div>
<div class="abs t " style="left:1008px;top:659px;font-size:14px;line-height:14px;color:#2b313a;font-weight:400;letter-spacing:0px;">Paid</div>
<div class="abs t " style="left:1227.4px;top:657px;font-size:14px;line-height:14px;color:#2b313a;font-weight:400;letter-spacing:0.2px;">Fulfilled</div>
<div class="abs t " style="left:1446.5px;top:659px;font-size:14px;line-height:14px;color:#2b313a;font-weight:400;letter-spacing:0.25px;">101.200</div>
<div class="abs" style="left:304px;top:764px;width:1268px;height:1px;background:#e6e7eb"></div>
<div class="abs t " style="left:316px;top:715px;font-size:14px;line-height:14px;color:#1f63e8;font-weight:400;letter-spacing:0.8px;-webkit-text-stroke:0.25px currentColor">#3-1013</div>
<svg class="abs" style="left:310px;top:732px" width="30" height="20" viewBox="0 0 30 20"><path d="M10.3 7.6 H17.6 A1.7 1.7 0 0 1 19.3 9.3 V14.4 A1.7 1.7 0 0 1 17.6 16.1 H10.3 A1.7 1.7 0 0 1 8.6 14.4 V9.3 A1.7 1.7 0 0 1 10.3 7.6Z" fill="none" stroke="#1c64f2" stroke-width="1.15" stroke-linecap="round" stroke-linejoin="round"/><path d="M12.2 13.4 L13.3 14.3 L14.1 9.6 L15.6 12.5" fill="none" stroke="rgba(28,100,242,0.6)" stroke-width="0.9" stroke-linecap="round" stroke-linejoin="round"/><circle cx="13.3" cy="14.2" r="0.8" fill="#1c64f2"/></svg>
<div class="abs t " style="left:336.5px;top:738px;font-size:12px;line-height:12px;color:#666c76;font-weight:400;letter-spacing:0.26px;">Main Outlet</div>
<div class="abs t " style="left:570px;top:725px;font-size:14px;line-height:14px;color:#262c34;font-weight:400;letter-spacing:0.68px;">5/5/2025 2:06 PM</div>
<div class="abs t " style="left:1008px;top:725px;font-size:14px;line-height:14px;color:#2b313a;font-weight:400;letter-spacing:0px;">Paid</div>
<div class="abs t " style="left:1227.4px;top:723px;font-size:14px;line-height:14px;color:#2b313a;font-weight:400;letter-spacing:0.2px;">Fulfilled</div>
<div class="abs t " style="left:1446.5px;top:725px;font-size:14px;line-height:14px;color:#2b313a;font-weight:400;letter-spacing:0.25px;">165.462</div>
<div class="abs" style="left:304px;top:830px;width:1268px;height:1px;background:#e6e7eb"></div>
<div class="abs t " style="left:316px;top:781px;font-size:14px;line-height:14px;color:#1f63e8;font-weight:400;letter-spacing:0.8px;-webkit-text-stroke:0.25px currentColor">#3-1012</div>
<svg class="abs" style="left:370px;top:776px" width="30" height="24" viewBox="0 0 30 24"><path d="M12.3 8.4 H8.7 A2 2 0 0 0 6.7 10.4 V16.5 A2 2 0 0 0 8.7 18.5 H15 A2 2 0 0 0 17 16.5 V13.2" fill="none" stroke="#1c64f2" stroke-width="1.2" stroke-linecap="round" stroke-linejoin="round"/><path d="M18.2 5.3 A1.3 1.3 0 0 1 20 7.1 L11.7 15.4 L9.2 16 L9.8 13.5 Z" fill="none" stroke="#1c64f2" stroke-width="1.2" stroke-linecap="round" stroke-linejoin="round"/></svg>
<svg class="abs" style="left:310px;top:798px" width="30" height="20" viewBox="0 0 30 20"><path d="M10.3 7.6 H17.6 A1.7 1.7 0 0 1 19.3 9.3 V14.4 A1.7 1.7 0 0 1 17.6 16.1 H10.3 A1.7 1.7 0 0 1 8.6 14.4 V9.3 A1.7 1.7 0 0 1 10.3 7.6Z" fill="none" stroke="#1c64f2" stroke-width="1.15" stroke-linecap="round" stroke-linejoin="round"/><path d="M12.2 13.4 L13.3 14.3 L14.1 9.6 L15.6 12.5" fill="none" stroke="rgba(28,100,242,0.6)" stroke-width="0.9" stroke-linecap="round" stroke-linejoin="round"/><circle cx="13.3" cy="14.2" r="0.8" fill="#1c64f2"/></svg>
<div class="abs t " style="left:336.5px;top:804px;font-size:12px;line-height:12px;color:#666c76;font-weight:400;letter-spacing:0.26px;">Main Outlet</div>
<div class="abs t " style="left:570px;top:791px;font-size:14px;line-height:14px;color:#262c34;font-weight:400;letter-spacing:0.68px;">5/5/2025 2:05 PM</div>
<div class="abs t " style="left:1008px;top:790px;font-size:14px;line-height:14px;color:#2b313a;font-weight:400;letter-spacing:0px;">&mdash;</div>
<div class="abs t " style="left:1446.5px;top:791px;font-size:14px;line-height:14px;color:#2b313a;font-weight:400;letter-spacing:0.25px;">0</div>
<div class="abs" style="left:304px;top:837px;width:1268px;height:1px;background:#e6e7eb"></div>
<div class="abs t " style="left:316px;top:856px;font-size:14.5px;line-height:14.5px;color:#5f6570;font-weight:400;letter-spacing:0px;-webkit-text-stroke:0.15px currentColor">Ready.</div>
<div class="abs t " style="left:1358px;top:855px;font-size:15px;line-height:15px;color:#666c76;font-weight:400;letter-spacing:0.05px;">Loaded 20 of 20</div>
<div class="abs box" style="left:1484px;top:846px;width:34px;height:34px;border-radius:7px"></div>
<div class="abs box" style="left:1526px;top:846px;width:34px;height:34px;border-radius:7px"></div>
<svg class="abs" style="left:1486px;top:848px" width="30" height="30" viewBox="0 0 30 30"><path d="M8.3 13.4 A7 7 0 0 1 22.2 12.4" fill="none" stroke="#1f2532" stroke-width="1.5" stroke-linecap="round" stroke-linejoin="round"/><path d="M22.5 8.3 V12.8 H18.3" fill="none" stroke="#1f2532" stroke-width="1.5" stroke-linecap="round" stroke-linejoin="round"/><path d="M21.6 16.2 A7 7 0 0 1 7.8 17.5" fill="none" stroke="#1f2532" stroke-width="1.5" stroke-linecap="round" stroke-linejoin="round"/><path d="M7.4 21.5 V17 H11.8" fill="none" stroke="#1f2532" stroke-width="1.5" stroke-linecap="round" stroke-linejoin="round"/></svg>
<svg class="abs" style="left:1528px;top:848px" width="30" height="30" viewBox="0 0 30 30"><path d="M10.2 20.2 A2 2 0 0 1 8.3 18.2 V10.3 A2 2 0 0 1 10.3 8.3 H19.7 A2 2 0 0 1 21.7 10.3 V18.2 A2 2 0 0 1 19.7 20.2" fill="none" stroke="#1f2532" stroke-width="1.5" stroke-linecap="round" stroke-linejoin="round"/><path d="M11.5 12.2 H18.5" fill="none" stroke="#1f2532" stroke-width="1.5" stroke-linecap="round" stroke-linejoin="round"/><path d="M11.5 15 H18.5" fill="none" stroke="#1f2532" stroke-width="1.5" stroke-linecap="round" stroke-linejoin="round"/><path d="M12.6 18.8 L15 21.2 L17.4 18.8" fill="none" stroke="#1f2532" stroke-width="1.2" stroke-linecap="round" stroke-linejoin="round"/></svg>
</body></html>
